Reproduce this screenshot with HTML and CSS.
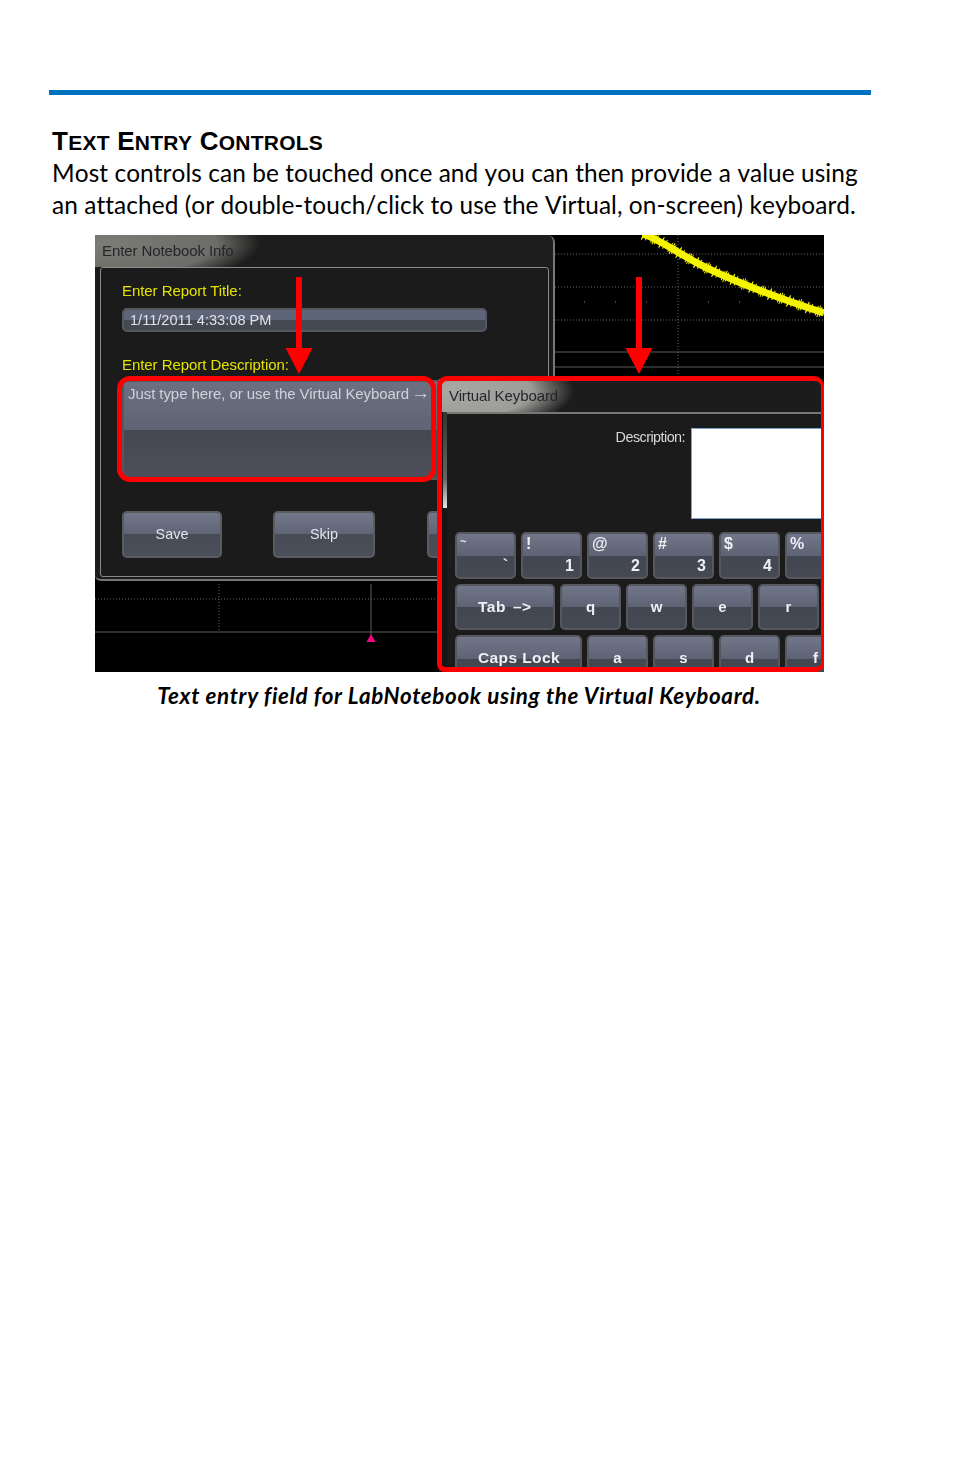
FILE: index.html
```html
<!DOCTYPE html>
<html lang="en">
<head>
<meta charset="utf-8">
<title>Text Entry Controls</title>
<link rel="stylesheet" href="styles.css">
</head>
<body>
<main class="page">
  <hr class="rule">
  <section class="copy">
    <h1 class="heading">T<span class="sc">EXT</span> E<span class="sc">NTRY</span> C<span class="sc">ONTROLS</span></h1>
    <p class="lead">Most controls can be touched once and you can then provide a value using<br>an attached (or double-touch/click to use the Virtual, on-screen) keyboard.</p>
  </section>
  <figure class="figure">
    <div class="shot">
      <svg class="scope" viewBox="0 0 729 437" width="729" height="437" aria-hidden="true">
        <g class="grid">
          <line x1="460" y1="19" x2="729" y2="19"/>
          <line x1="460" y1="52" x2="729" y2="52"/>
          <line x1="460" y1="85" x2="729" y2="85"/>
          <line x1="583" y1="0" x2="583" y2="145"/>
          <line x1="0" y1="364" x2="345" y2="364"/>
          <line x1="124" y1="349" x2="124" y2="396"/>
        </g>
        <g class="ticks">
          <line x1="489" y1="67" x2="490" y2="67"/>
          <line x1="520" y1="67" x2="521" y2="67"/>
          <line x1="551" y1="67" x2="552" y2="67"/>
          <line x1="613" y1="67" x2="614" y2="67"/>
          <line x1="644" y1="67" x2="645" y2="67"/>
        </g>
        <g class="solid">
          <line x1="460" y1="117" x2="729" y2="117"/>
          <line x1="460" y1="132" x2="729" y2="132"/>
          <line x1="0" y1="397" x2="345" y2="397"/>
          <line x1="276" y1="349" x2="276" y2="400"/>
        </g>
        <polygon class="marker" points="276,399 280.5,407 271.5,407"/>
        <rect class="pink" x="0" y="270" width="4" height="14"/>
        <path class="trace" d="M548 -1C568 6 585 20 612 33S680 62 729 78"/>
        <path class="fuzz fuzz-a" d="M548 -1C568 6 585 20 612 33S680 62 729 78"/>
        <path class="fuzz fuzz-b" d="M548 -1C568 6 585 20 612 33S680 62 729 78"/>
      </svg>

      <section class="window notebook">
        <div class="titlebar"><span class="title-dark">Enter Notebook Info</span></div>
        <div class="panel">
          <p class="label label-title">Enter Report Title:</p>
          <div class="field field-title">1/11/2011 4:33:08 PM</div>
          <p class="label label-desc">Enter Report Description:</p>
          <div class="field field-desc">Just type here, or use the Virtual Keyboard <span class="hint-arrow">→</span></div>
          <div class="actions">
            <button class="btn btn-save">Save</button>
            <button class="btn btn-skip">Skip</button>
            <button class="btn btn-more"></button>
          </div>
        </div>
      </section>

      <div class="callout callout-desc"></div>

      <section class="window keyboard">
        <div class="titlebar kb-titlebar"><span class="title-dark">Virtual Keyboard</span></div>
        <div class="kb-panel">
          <div class="desc-row">
            <span class="desc-label">Description:</span>
            <div class="desc-box"></div>
          </div>
          <div class="keys">
            <div class="key-row">
              <div class="key"><span class="sup sup-small">~</span><span class="sub">`</span></div>
              <div class="key"><span class="sup">!</span><span class="sub">1</span></div>
              <div class="key"><span class="sup">@</span><span class="sub">2</span></div>
              <div class="key"><span class="sup">#</span><span class="sub">3</span></div>
              <div class="key"><span class="sup">$</span><span class="sub">4</span></div>
              <div class="key"><span class="sup">%</span></div>
            </div>
            <div class="key-row">
              <div class="key key-wide-1 key-text key-tab">Tab –&gt;</div>
              <div class="key key-char">q</div>
              <div class="key key-char">w</div>
              <div class="key key-char">e</div>
              <div class="key key-char">r</div>
            </div>
            <div class="key-row">
              <div class="key key-wide-2 key-text">Caps Lock</div>
              <div class="key key-char">a</div>
              <div class="key key-char">s</div>
              <div class="key key-char">d</div>
              <div class="key key-char">f</div>
            </div>
          </div>
        </div>
      </section>

      <div class="callout callout-kb"></div>

      <svg class="arrow arrow-left" viewBox="0 0 28 98" width="28" height="98" aria-hidden="true"><path d="M11 0h6v71h10.500L14 97 .5 71H11z"/></svg>
      <svg class="arrow arrow-right" viewBox="0 0 28 98" width="28" height="98" aria-hidden="true"><path d="M11 0h6v71h10.500L14 97 .5 71H11z"/></svg>
    </div>
    <figcaption class="caption">Text entry field for LabNotebook using the Virtual Keyboard.</figcaption>
  </figure>
</main>
</body>
</html>
```

FILE: styles.css
```css
* { box-sizing: border-box; }
html, body { margin: 0; padding: 0; background: #fff; }
body { width: 954px; height: 1475px; overflow: hidden; color: #000; font-family: "Lato", "Liberation Sans", sans-serif; }
.page { padding: 90px 0 0 49px; }
.rule { width: 822px; height: 5px; margin: 0; border: 0; background: #0070c0; }
.copy { padding: 30px 0 0 3px; }
.heading { height: 32px; margin: 0; font: bold 26px/32px "Liberation Sans", Arial, sans-serif; letter-spacing: .25px; }
.sc { font-size: 21px; }
.lead { margin: 0; font-size: 24.4px; line-height: 32px; letter-spacing: .08px; font-kerning: none; font-variant-ligatures: none; }
.figure { margin: 14px 0 0 46px; width: 729px; }
.shot { position: relative; width: 729px; height: 437px; overflow: hidden; background: #000; font-family: "Liberation Sans", Arial, sans-serif; filter: blur(.35px); }
.caption { margin: 9px 0 0 -46px; width: 820px; text-align: center; font-size: 22.4px; line-height: 30px; font-weight: 700; font-style: italic; letter-spacing: .65px; }

.scope { position: absolute; left: 0; top: 0; }
.grid line { stroke: #666; stroke-width: 1; stroke-dasharray: 1 2; }
.ticks line { stroke: #888; stroke-width: 1; }
.solid line { stroke: #5c5c5c; stroke-width: 1; }
.marker { fill: #f0047f; }
.pink { fill: #b01a70; }
.trace { fill: none; stroke: #f5f500; stroke-width: 7; }
.fuzz { fill: none; stroke: #f5f500; }
.fuzz-a { stroke-width: 10; stroke-dasharray: 1 3 1 5; }
.fuzz-b { stroke-width: 12; stroke-dasharray: 1 11 1 7; }

.window { position: absolute; overflow: hidden; background: #1b1b1b; }
.notebook { left: 0; top: 0; width: 460px; height: 346px; border: 1px solid #777; border-width: 0 2px 2px 0; border-radius: 0 8px 0 6px; }
.titlebar { height: 32px; padding: 8px 0 0 7px; font-size: 15px; line-height: 16px; letter-spacing: -.1px; background: radial-gradient(ellipse 155px 44px at 10px 8px, #7c7c76 0, #6c6c68 72%, rgba(40,40,40,0) 100%), #1d1d1d; }
.title-dark { color: #23262c; }
.panel { position: relative; margin: 0 4px 0 5px; height: 310px; border: 1px solid #8a8a8a; border-radius: 3px; background: #1b1b1b; }
.label { position: absolute; left: 21px; margin: 0; color: #e3e300; font-size: 15px; line-height: 16px; letter-spacing: -.06px; }
.label-title { top: 15px; }
.label-desc { top: 89px; }
.field { position: absolute; left: 21px; border: 2px solid #55585f; color: #dfe2e8; }
.field-title { top: 40px; width: 365px; height: 24px; padding-left: 6px; font-size: 14.6px; line-height: 20px; border-radius: 5px; background: linear-gradient(#5f6578 0, #5f6578 50%, #434853 50%, #444954 100%); }
.field-desc { top: 112px; width: 325px; height: 100px; padding: 3px 0 0 4px; font-size: 15px; letter-spacing: -.07px; line-height: 18px; border-radius: 4px; background: linear-gradient(#6c7082 0, #5f6373 50%, #454852 50%, #4d505b 100%); color: #d0d3da; }
.hint-arrow { margin-left: -2px; font-size: 19px; line-height: 0; }
.actions { position: absolute; left: 21px; top: 243px; width: 340px; height: 47px; display: flex; }
.btn { flex: none; height: 47px; padding: 0 0 1px; border: 2px solid #5a5c60; border-radius: 5px; background: linear-gradient(#71768a 0, #5f6475 50%, #484c57 50%, #4a4e59 100%); color: #e1e5ec; font: 14.4px "Liberation Sans", Arial, sans-serif; }
.btn-save { width: 100px; margin-right: 51px; }
.btn-skip { width: 102px; margin-right: 52px; }
.btn-more { width: 40px; }

.callout { position: absolute; border: 5px solid #f00; pointer-events: none; }
.callout-desc { left: 22px; top: 141px; width: 319px; height: 106px; border-radius: 13px; }
.callout-kb { left: 342px; top: 141px; width: 387px; height: 296px; border-width: 5px 3px 5px 5px; border-radius: 10px 10px 8px 8px; }

.keyboard { left: 344px; top: 144px; width: 385px; height: 293px; background: #161616; }
.keyboard::before { content: ""; position: absolute; left: 4px; top: 33px; width: 4px; height: 96px; background: linear-gradient(#333 0, #666 70%, #e6e6e6 100%); }
.kb-titlebar { height: 33px; padding: 9px 0 0 10px; background: radial-gradient(ellipse 125px 42px at 10px 12px, #a8a8a4 0, #9c9c98 66%, rgba(30,30,30,0) 100%), #1c1c1c; }
.kb-panel { margin-left: 8px; height: 260px; border-top: 2px solid #777; background: #1b1b1b; }
.desc-row { display: flex; justify-content: flex-end; align-items: flex-start; padding-top: 14px; gap: 6px; }
.desc-label { color: #d8d8d8; font-size: 14.4px; line-height: 18px; letter-spacing: -.55px; }
.desc-box { width: 133px; height: 91px; background: #fff; border: 1px solid #7aa4cf; border-right: 0; }
.keys { display: flex; flex-direction: column; gap: 5px; padding: 13px 0 0 8px; }
.key-row { display: flex; gap: 5px; height: 46.500px; }
.key { position: relative; flex: 0 0 61px; height: 46.500px; border: 2px solid #56585d; border-radius: 5px; background: linear-gradient(#71768a 0, #5d6274 50%, #434752 50%, #454954 100%); color: #eef0f4; font: bold 15px "Liberation Sans", Arial, sans-serif; }
.sup { position: absolute; left: 3px; top: 1px; font-size: 16px; }
.sup-small { font-size: 11px; }
.sub { position: absolute; right: 6px; bottom: 2px; font-size: 16px; }
.key-wide-1 { flex-basis: 100px; }
.key-wide-2 { flex-basis: 127px; }
.key-text { padding: 12px 0 0 21px; font-size: 15.500px; line-height: 18px; letter-spacing: .4px; }
.key-tab { word-spacing: 2px; letter-spacing: .55px; }
.key-char { text-align: center; padding-top: 12px; line-height: 18px; }

.arrow { position: absolute; top: 42px; fill: #f00; }
.arrow-left { left: 190px; }
.arrow-right { left: 530px; }
```
